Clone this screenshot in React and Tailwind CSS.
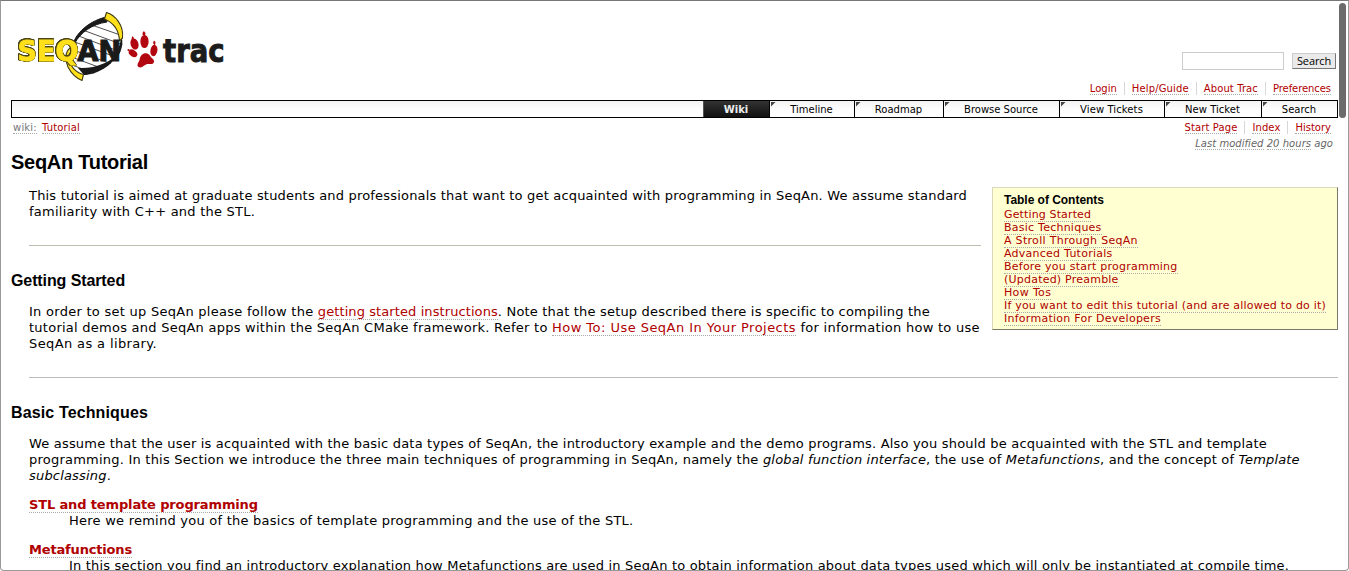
const link = "text-[#b00000] border-b border-dotted border-[#aaa]";

function Logo() {
  return (
    <svg width="250" height="78" viewBox="0 8 250 78" className="block">
      <defs>
        <clipPath id="helix">
          <path d="M72 70C64 52 77 25 107 18C126 25 126 50 116 58C108 68 92 77 82 74Z" />
        </clipPath>
      </defs>
      <g clipPath="url(#helix)" stroke="#222" strokeWidth="0.8">
        <path d="M86 23L126 37M80 29L126 46M76 35L126 54M72 41L124 60M68 48L120 67M66 55L112 72M64 62L104 77" />
      </g>
      <path d="M106 17C86 22 73 36 71.500 50L75 43C80 33 92 24 107 22Z" fill="#1a1a1a" stroke="#1a1a1a" />
      <path d="M78 68L84 75C96 75 112 66 118 54C110 62 96 69 78 68Z" fill="#1a1a1a" />
      <path d="M121 36C124 42 122 51 116 60L110 62C118 52 121 43 121 36Z" fill="#1a1a1a" />
      <path d="M106.500 12.500C115 15 124 25 122.500 38L119.500 41C119 30 114 23 104.500 19Z" fill="#ffe01b" stroke="#3d3913" strokeWidth="1.100" strokeLinejoin="round" />
      <path d="M70 48C65 52 65 60 68 67C71 73 76 78 82 80.500L83.500 74.500C76 73 70 66 69 60" fill="#ffe01b" stroke="#3d3913" strokeWidth="1.100" strokeLinejoin="round" />
      <text x="17.500" y="61" textLength="61" lengthAdjust="spacingAndGlyphs" fontFamily="DejaVu Sans" fontWeight="bold" fontSize="28" fill="#ffe01b" stroke="#ffe01b" strokeWidth="0.900" className="[filter:drop-shadow(0.5px_0_0_#4a4517)_drop-shadow(-0.5px_0_0_#4a4517)_drop-shadow(0_0.5px_0_#4a4517)_drop-shadow(0_-0.5px_0_#4a4517)]">SEQ</text>
      <text x="77.500" y="61" textLength="43.500" lengthAdjust="spacingAndGlyphs" fontFamily="DejaVu Sans" fontWeight="bold" fontSize="28.500" fill="#1a1a1a" stroke="#1a1a1a" strokeWidth="1.200">AN</text>
      <g fill="#b20710">
        <ellipse cx="144.500" cy="41.500" rx="4.100" ry="6.600" />
        <path d="M142.500 35L142.800 32L144 31.300L145.500 33L145 36Z" />
        <ellipse cx="134.500" cy="44" rx="3.900" ry="5.700" transform="rotate(-18 134.500 44)" />
        <path d="M131.500 38.500L132.500 36L134 38L133 40Z" />
        <ellipse cx="133" cy="53.300" rx="3.200" ry="4.700" transform="rotate(-55 133 53.300)" />
        <circle cx="128.500" cy="50" r="1.100" />
        <ellipse cx="153.900" cy="50.500" rx="3.500" ry="5.700" transform="rotate(10 153.900 50.500)" />
        <path d="M153 43L154 40.500L155.500 42L155 46Z" />
        <path d="M144 53.500C147 52.500 149.500 54 150.500 56.500C151.500 58.500 154.500 59 154 62C153 65.500 149 63 146 64.500C143 66 141 68.500 138.500 67C136 65 139 62 139.500 60C140 57 141 54.500 144 53.500Z" />
      </g>
      <text x="163" y="61.500" textLength="61.500" lengthAdjust="spacingAndGlyphs" fontFamily="DejaVu Sans" fontWeight="bold" fontSize="31.500" fill="#1c1c1c" stroke="#1c1c1c" strokeWidth="1">trac</text>
    </svg>
  );
}

const tabs = [
  ["Timeline", "w-[85px]", "pr-[7px]"],
  ["Roadmap", "w-[89px]", "pr-[7px]"],
  ["Browse Source", "w-[116px]", "pr-[7px]"],
  ["View Tickets", "w-[105px]", "pr-[7px] tracking-[0.1px]"],
  ["New Ticket", "w-[97px]", "pr-[7px] tracking-[0.05px]"],
  ["Search", "w-[76px]", "pr-[7px]"],
];

const toc = [
  ["Getting Started", "tracking-[0.14px]"],
  ["Basic Techniques", "tracking-[0.24px]"],
  ["A Stroll Through SeqAn", "tracking-[0.3px]"],
  ["Advanced Tutorials", "tracking-[0.25px]"],
  ["Before you start programming", "tracking-[0.235px]"],
  ["(Updated) Preamble", "tracking-[0.22px]"],
  ["How Tos", "tracking-[0.35px]"],
  ["If you want to edit this tutorial (and are allowed to do it)", "tracking-[0.204px]"],
  ["Information For Developers", "tracking-[0.26px]"],
];

const meta = [
  ["Login", ""],
  ["Help/Guide", "tracking-[0.15px]"],
  ["About Trac", "tracking-[0.1px]"],
  ["Preferences", "tracking-[-0.07px]"],
];

function LinkBar({ items }) {
  return (
    <ul className="flex justify-end text-[10px] leading-[13px]">
      {items.map(([t, c], i) => (
        <li key={t} className={i ? "ml-[7px] border-l border-[#d7d7d7] pl-[7px]" : ""}>
          <a className={`${link} ${c}`}>{t}</a>
        </li>
      ))}
    </ul>
  );
}

function Heading({ children, className }) {
  return <h2 className={`font-['Liberation_Sans',sans-serif] text-[16px] leading-[18px] font-bold ${className}`}>{children}</h2>;
}

export default function App() {
  return (
    <div className="relative h-[571px] w-[1349px] overflow-hidden rounded-b-[4px] border border-[#999] border-t-[#777] bg-white pr-[10px] pl-[10px] font-['DejaVu_Sans',sans-serif] text-[13px] leading-4 whitespace-nowrap text-black">
      <header className="flex h-[99px] justify-between pt-[7px]">
        <div className="-ml-[11px]"><Logo /></div>
        <div className="pt-[44px]">
          <form className="flex items-center justify-end gap-[8px] pr-[2px]">
            <div className="h-[18px] w-[102px] border border-[#ccc]" />
            <button type="button" className="flex h-4 w-11 justify-center border border-[#ccc] border-r-[#777] border-b-[#777] bg-[#eaeaea] font-['Open_Sans',sans-serif] text-[11px] leading-[14px]"><span className="tracking-[-0.1px]">Search</span></button>
          </form>
          <div className="mt-[12px] pr-[7px]"><LinkBar items={meta} /></div>
        </div>
      </header>

      <nav className="flex h-[18px] justify-end border border-black bg-linear-to-b from-[#f3f3f3] via-[#fdfdfd] to-white text-[10px] leading-[17px]">
        <div className="w-[66px] border-l border-[#555] bg-linear-to-b from-[#333] to-[#111] pr-px text-center font-bold text-[#eee]">Wiki</div>
        {tabs.map(([t, w, c]) => (
          <div key={t} className={`flex border-l border-black ${w}`}>
            <svg width="5" height="5" className="mt-px ml-px shrink-0"><path d="M0 0H4.500L0 4.500Z" fill="#444" /></svg>
            <span className={`flex-1 text-center ${c}`}>{t}</span>
          </div>
        ))}
      </nav>

      <div className="flex h-[31px] justify-between pt-[3px] pr-[7px] pl-[2px]">
        <div className="text-[10px] leading-[13px]">
          <a className="border-b border-dotted border-[#aaa] tracking-[0.2px] text-[#777]">wiki:</a>
          <a className={`ml-[5px] tracking-[0.15px] ${link}`}>Tutorial</a>
        </div>
        <div className="text-[10px]">
          <LinkBar items={[["Start Page", "tracking-[0.1px]"], ["Index", "tracking-[0.1px]"], ["History", ""]]} />
          <div className="-mr-[2px] mt-[3px] text-right leading-[14px] tracking-[0.04px] text-[#666] italic">
            <span className="border-b border-dotted border-[#aaa]">Last modified</span>{" "}
            <span className="border-b border-dotted border-[#aaa]">20 hours</span> ago
          </div>
        </div>
      </div>

      <main>
        <h1 className="mt-px mb-px font-['Liberation_Sans',sans-serif] text-[20px] leading-6 font-bold tracking-[-0.27px]">SeqAn Tutorial</h1>
        <div className="flex justify-between pt-[12px]">
          <div className="w-[970px]">
            <div className="ml-[18px] pt-px">
              <p className="tracking-[0.187px]">
                This tutorial is aimed at graduate students and professionals that want to get acquainted with programming in SeqAn. We assume standard
                <br /><span className="tracking-[0.24px]">familiarity with C++ and the STL.</span>
              </p>
              <hr className="mt-[25px] border-t border-[#bcbcb0]" />
            </div>
            <Heading className="mt-[26px] tracking-[-0.1px]">Getting Started</Heading>
            <div className="mt-[14px] ml-[18px]">
              <div><span className="tracking-[0.27px]">In order to set up SeqAn please follow the </span><a className={`${link} tracking-[0.09px]`}>getting started instructions</a><span className="tracking-[0.186px]">. Note that the setup described there is specific to compiling the</span></div>
              <div><span className="tracking-[0.25px]">tutorial demos and SeqAn apps within the SeqAn CMake framework. Refer to </span><a className={`${link} tracking-[0.464px]`}>How To: Use SeqAn In Your Projects</a><span className="tracking-[0.27px]"> for information how to use</span></div>
              <div className="tracking-[0.38px]">SeqAn as a library.</div>
            </div>
          </div>
          <aside className="h-[143px] w-[346px] border border-[#d7d7bb] border-r-[#77776a] border-b-[#77776a] bg-[#ffffd2] pt-[5px] pl-[11px] text-[11px] leading-[13px]">
            <h4 className="mb-px font-['Liberation_Sans',sans-serif] text-[12px] leading-[14px] font-bold tracking-[-0.03px]">Table of Contents</h4>
            {toc.map(([t, c]) => (
              <div key={t}><a className={`${link} ${c}`}>{t}</a></div>
            ))}
          </aside>
        </div>
        <hr className="mt-[25px] ml-[18px] border-t border-[#bbb]" />
        <Heading className="mt-[26px] tracking-[0.13px]">Basic Techniques</Heading>
        <div className="mt-[14px] ml-[18px] tracking-[0.189px]">
          <div>We assume that the user is acquainted with the basic data types of SeqAn, the introductory example and the demo programs. Also you should be acquainted with the STL and template</div>
          <div><span className="tracking-[0.225px]">programming. In this Section we introduce the three main techniques of programming in SeqAn, namely the </span><span className="tracking-[0.165px]"><em>global function interface</em>, the use of <em>Metafunctions</em>, and the concept of <em>Template</em></span></div>
          <div><em>subclassing</em>.</div>
          <dl className="mt-[13px]">
            <dt className="font-bold tracking-[-0.14px]"><a className={link}>STL and template programming</a></dt>
            <dd className="ml-[40px] tracking-[0.24px]">Here we remind you of the basics of template programming and the use of the STL.</dd>
            <dt className="mt-[13px] font-bold tracking-[-0.17px]"><a className={link}>Metafunctions</a></dt>
            <dd className="ml-[40px]">In this section you find an introductory explanation how Metafunctions are used in SeqAn to obtain information about data types used which will only be instantiated at compile time.</dd>
          </dl>
        </div>
      </main>

      <div className="absolute top-[2px] right-[2px] h-[115px] w-[7px] rounded-full bg-[#6b6b6b]" />
    </div>
  );
}
